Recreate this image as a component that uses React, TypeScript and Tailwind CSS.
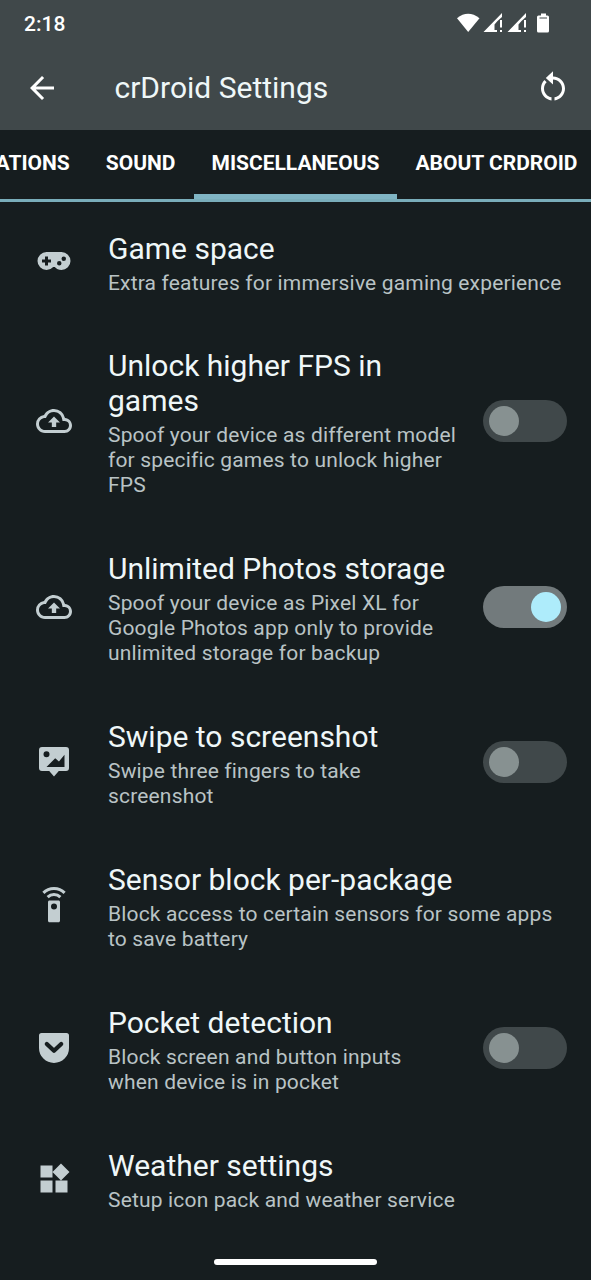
import type { ReactNode } from 'react';

const Icon = ({ children }: { children: ReactNode }) => (
  <svg viewBox="0 0 24 24" className="size-9 shrink-0 fill-[#c3ced1]">{children}</svg>
);

const Cloud = () => (
  <Icon>
    <path d="M19.35 10.04A7.49 7.49 0 0 0 12 4C9.11 4 6.6 5.64 5.35 8.04A5.994 5.994 0 0 0 0 14c0 3.31 2.69 6 6 6h13c2.76 0 5-2.24 5-5 0-2.64-2.05-4.78-4.65-4.96zM19 18H6c-2.21 0-4-1.79-4-4 0-2.05 1.53-3.76 3.56-3.97l1.07-.11.5-.95A5.469 5.469 0 0 1 12 6c2.62 0 4.88 1.86 5.39 4.43l.3 1.5 1.53.11A2.98 2.98 0 0 1 22 15c0 1.65-1.35 3-3 3zM8 13h2.55v3h2.9v-3H16l-4-4z" />
  </Icon>
);

const Gamepad = () => (
  <Icon>
    <path
      fillRule="evenodd"
      d="M7 6h10a6 6 0 0 1 6 6 6 6 0 0 1-6 6c-1.78 0-3.38-.77-4.48-2h-1.04A6 6 0 0 1 7 18a6 6 0 0 1-6-6 6 6 0 0 1 6-6zM6 9v2H4v2h2v2h2v-2h2v-2H8V9zm9.5 3a1.5 1.5 0 1 0 0 3 1.5 1.5 0 0 0 0-3zm3-3a1.5 1.5 0 1 0 0 3 1.5 1.5 0 0 0 0-3z"
    />
  </Icon>
);

const Screenshot = () => (
  <Icon>
    <path
      fillRule="evenodd"
      d="M4 2h16a2 2 0 0 1 2 2v12a2 2 0 0 1-2 2h-4.800L12 21.700 8.800 18H4a2 2 0 0 1-2-2V4a2 2 0 0 1 2-2zM7 4.800a2 2 0 1 0 0 4 2 2 0 0 0 0-4zM7 15.300H19V7.200l-3.700 4.500-2.500-2.200z"
    />
  </Icon>
);

const Remote = () => (
  <Icon>
    <path
      fillRule="evenodd"
      d="M15 9H9c-.55 0-1 .45-1 1v12.500c0 .55.45 1 1 1h6c.55 0 1-.45 1-1V10c0-.55-.45-1-1-1zm-3 6a2 2 0 1 1 0-4 2 2 0 0 1 0 4z"
    />
    <path d="M7.050 6.050l1.410 1.410a5 5 0 0 1 7.080 0l1.410-1.410a7 7 0 0 0-9.900 0z" />
    <path d="M12 0C8.960 0 6.210 1.230 4.220 3.220l1.410 1.410a9 9 0 0 1 12.740 0l1.410-1.410A10.980 10.980 0 0 0 12 0z" />
  </Icon>
);

const Pocket = () => (
  <Icon>
    <path d="M3.700 2h16.600A1.700 1.700 0 0 1 22 3.700V12a10 10 0 0 1-20 0V3.700A1.700 1.700 0 0 1 3.700 2z" />
    <path d="M7.200 9.300 12 13.900l4.800-4.600" fill="none" stroke="#161d1f" strokeWidth="2.800" strokeLinecap="round" strokeLinejoin="round" />
  </Icon>
);

const Widgets = () => (
  <Icon>
    <path d="M13 13v8h8v-8h-8zM3 21h8v-8H3v8zM3 3v8h8V3H3zm13.660-1.310L11 7.340 16.660 13l5.660-5.660-5.660-5.650z" />
  </Icon>
);

const Signal = () => (
  <>
    <path d="M27.500 20 46 1v4l-4.500 4-3 3.500V18H41v2z" />
    <path d="M44 8h2v7.500h-2zM44 18h2v2h-2z" />
  </>
);

const Switch = ({ on }: { on: boolean }) => (
  <div
    role="switch"
    aria-checked={on}
    className={`flex h-[42px] w-[84.5px] shrink-0 items-center rounded-full px-1.5 ${on ? 'justify-end bg-[#727a7c]' : 'bg-[#40484a]'}`}
  >
    <div className={`size-[30px] rounded-full ${on ? 'bg-[#aeecfb]' : 'bg-[#879191]'}`} />
  </div>
);

type Item = { title: string[]; summary: string[]; icon: ReactNode; height: string; on?: boolean };

const items: Item[] = [
  { title: ['Game space'], summary: ['Extra features for immersive gaming experience'], icon: <Gamepad />, height: 'h-[118px]' },
  {
    title: ['Unlock higher FPS in', 'games'],
    summary: ['Spoof your device as different model', 'for specific games to unlock higher', 'FPS'],
    icon: <Cloud />,
    height: 'h-[202.5px]',
    on: false,
  },
  {
    title: ['Unlimited Photos storage'],
    summary: ['Spoof your device as Pixel XL for', 'Google Photos app only to provide', 'unlimited storage for backup'],
    icon: <Cloud />,
    height: 'h-[168px]',
    on: true,
  },
  { title: ['Swipe to screenshot'], summary: ['Swipe three fingers to take', 'screenshot'], icon: <Screenshot />, height: 'h-[143px]', on: false },
  {
    title: ['Sensor block per-package'],
    summary: ['Block access to certain sensors for some apps', 'to save battery'],
    icon: <Remote />,
    height: 'h-[143px]',
  },
  {
    title: ['Pocket detection'],
    summary: ['Block screen and button inputs', 'when device is in pocket'],
    icon: <Pocket />,
    height: 'h-[143px]',
    on: false,
  },
  { title: ['Weather settings'], summary: ['Setup icon pack and weather service'], icon: <Widgets />, height: 'h-[118px]' },
];

const tab = 'flex h-[69px] shrink-0 items-center justify-center px-[18px] pb-px';

export default function App() {
  return (
    <div className="flex h-[1280px] w-[591px] flex-col overflow-hidden bg-[#161d1f] font-[Roboto,sans-serif] text-[#eff7f8]">
      <header className="h-[130px] shrink-0 bg-[#40484a]">
        <div className="flex h-12 items-center justify-between pl-6 pr-[41px]">
          <span className="text-[21px] font-medium leading-6 text-white">2:18</span>
          <svg viewBox="0 0 94 24" className="h-6 w-[94px] fill-white">
            <path d="M1 6.200Q12 -2.500 23.500 6.200L12.200 20z" />
            <Signal />
            <g transform="translate(24)">
              <Signal />
            </g>
            <path fillRule="evenodd" d="M85 1.500h5v2h1.500a1.500 1.500 0 0 1 1.500 1.500v14a1.500 1.500 0 0 1-1.500 1.500h-9a1.500 1.500 0 0 1-1.500-1.500V5a1.500 1.500 0 0 1 1.500-1.500H85zM83.500 5.500v1h7.500v-1z" />
          </svg>
        </div>
        <div className="flex h-20 items-center pl-6 pr-5">
          <svg viewBox="0 0 24 24" className="size-9 fill-white">
            <path d="M20 11H7.830l5.590-5.590L12 4l-8 8 8 8 1.410-1.410L7.830 13H20v-2z" />
          </svg>
          <h1 className="ml-[54.5px] flex-1 text-[30px] leading-9">crDroid Settings</h1>
          <svg viewBox="0 0 24 24" className="mb-[3px] size-9 fill-white">
            <path d="M12 5V1.500L7.200 6l4.800 4.300V7c3.310 0 6 2.690 6 6 0 2.970-2.170 5.430-5 5.910v2.020c3.950-.49 7-3.850 7-7.930 0-4.420-3.580-8-8-8zm-6 8c0-1.650.67-3.150 1.760-4.240L6.340 7.340A8.014 8.014 0 0 0 4 13c0 4.080 3.050 7.440 7 7.930v-2.020c-2.830-.48-5-2.940-5-5.910z" />
          </svg>
        </div>
      </header>

      <nav className="flex h-[72px] shrink-0 justify-end overflow-hidden border-b-[3px] border-[#79adba] text-[21px] font-bold text-white">
        <div className={tab}>NOTIFICATIONS</div>
        <div className={tab}>SOUND</div>
        <div className="flex h-[69px] shrink-0 items-center justify-center border-b-[5px] border-[#7fb4c3] px-[18px] pt-1">MISCELLANEOUS</div>
        <div className={`${tab} -mr-[4.5px]`}>ABOUT CRDROID</div>
      </nav>

      <main className="shrink-0">
        {items.map((item) => (
          <section key={item.title[0]} className={`flex items-center pl-9 pr-6 ${item.height}`}>
            {item.icon}
            <div className="ml-9 flex-1 whitespace-nowrap pt-1">
              {item.title.map((line) => (
                <div key={line} className="text-[30px] leading-[35px]">{line}</div>
              ))}
              <div className="mt-[5px] text-[21px] leading-[25px] tracking-[0.17px] text-[#b9c3c5]">
                {item.summary.map((line) => (
                  <div key={line}>{line}</div>
                ))}
              </div>
            </div>
            {item.on !== undefined && <Switch on={item.on} />}
          </section>
        ))}
      </main>
      <div className="mx-auto mt-[21px] h-1.5 w-[163px] shrink-0 rounded-full bg-white" />
    </div>
  );
}
